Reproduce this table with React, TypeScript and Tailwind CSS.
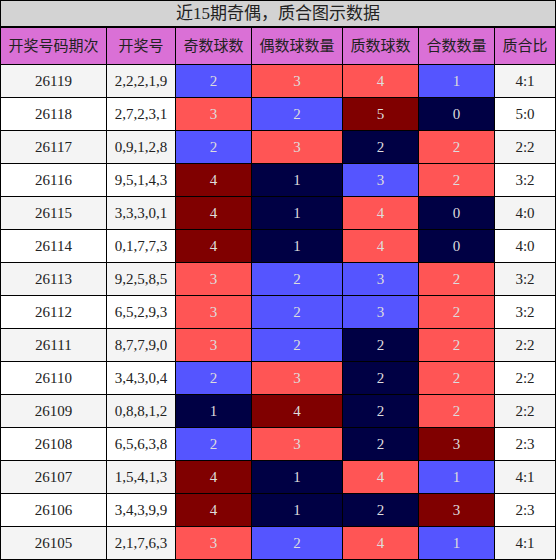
import React from "react";

type Row = [string, string, number, number, number, number, string];

const rows: Row[] = [
  ["26119", "2,2,2,1,9", 2, 3, 4, 1, "4:1"],
  ["26118", "2,7,2,3,1", 3, 2, 5, 0, "5:0"],
  ["26117", "0,9,1,2,8", 2, 3, 2, 2, "2:2"],
  ["26116", "9,5,1,4,3", 4, 1, 3, 2, "3:2"],
  ["26115", "3,3,3,0,1", 4, 1, 4, 0, "4:0"],
  ["26114", "0,1,7,7,3", 4, 1, 4, 0, "4:0"],
  ["26113", "9,2,5,8,5", 3, 2, 3, 2, "3:2"],
  ["26112", "6,5,2,9,3", 3, 2, 3, 2, "3:2"],
  ["26111", "8,7,7,9,0", 3, 2, 2, 2, "2:2"],
  ["26110", "3,4,3,0,4", 2, 3, 2, 2, "2:2"],
  ["26109", "0,8,8,1,2", 1, 4, 2, 2, "2:2"],
  ["26108", "6,5,6,3,8", 2, 3, 2, 3, "2:3"],
  ["26107", "1,5,4,1,3", 4, 1, 4, 1, "4:1"],
  ["26106", "3,4,3,9,9", 4, 1, 2, 3, "2:3"],
  ["26105", "2,1,7,6,3", 3, 2, 4, 1, "4:1"],
];

const NAVY = "bg-[#000044]";
const BLUE = "bg-[#5555ff]";
const RED = "bg-[#ff5555]";
const DARK = "bg-[#800000]";

const oeColor: Record<number, string> = { 0: NAVY, 1: NAVY, 2: BLUE, 3: RED, 4: DARK, 5: DARK };
const primeColor: Record<number, string> = { 1: NAVY, 2: NAVY, 3: BLUE, 4: RED, 5: DARK };
const compColor: Record<number, string> = { 0: NAVY, 1: BLUE, 2: RED, 3: DARK, 4: DARK };

const headers = ["开奖号码期次", "开奖号", "奇数球数", "偶数球数量", "质数球数", "合数数量", "质合比"];

const font = { fontFamily: '"Liberation Serif", "Noto Sans CJK SC", serif' };

export default function App() {
  return (
    <div className="w-[556px] h-[560px] bg-black p-px flex flex-col" style={font}>
      <div className="h-[25px] bg-[#d3d3d3] flex items-center justify-center text-[17px] text-[#222] leading-none">
        近15期奇偶，质合图示数据
      </div>
      <div className="mt-[2px] grid grid-cols-[105px_68px_75px_90px_75px_75px_60px] grid-rows-[36px_repeat(15,32px)] gap-px">
        {headers.map((h) => (
          <div
            key={h}
            className="bg-[#da70d6] flex items-center justify-center text-[15px] text-[#222] leading-none"
          >
            {h}
          </div>
        ))}
        {rows.map((r, i) => {
          const bg = i % 2 === 0 ? "bg-[#f4f4f4]" : "bg-white";
          const plain = `${bg} flex items-center justify-center text-[15px] text-[#222] leading-none`;
          const colored = "flex items-center justify-center text-[15px] text-[#dddddd] leading-none";
          return (
            <React.Fragment key={r[0]}>
              <div className={plain}>{r[0]}</div>
              <div className={plain}>{r[1]}</div>
              <div className={`${colored} ${oeColor[r[2]]}`}>{r[2]}</div>
              <div className={`${colored} ${oeColor[r[3]]}`}>{r[3]}</div>
              <div className={`${colored} ${primeColor[r[4]]}`}>{r[4]}</div>
              <div className={`${colored} ${compColor[r[5]]}`}>{r[5]}</div>
              <div className={plain}>{r[6]}</div>
            </React.Fragment>
          );
        })}
      </div>
    </div>
  );
}
